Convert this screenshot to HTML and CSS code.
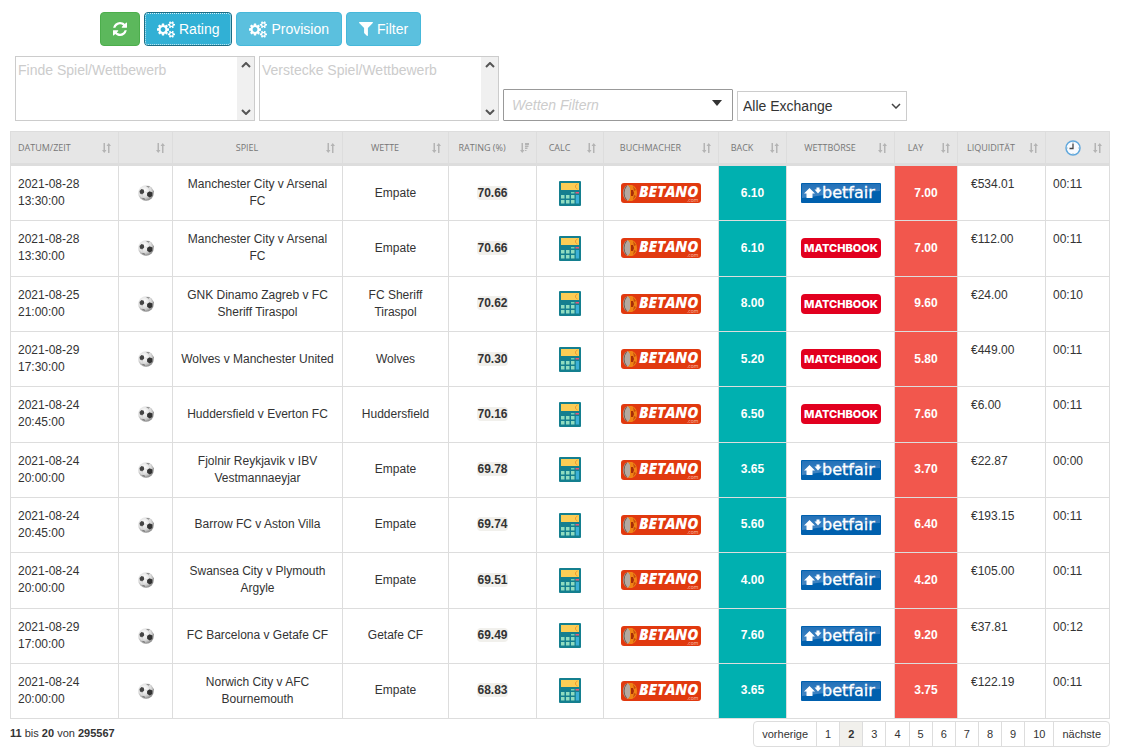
FILE: index.html
```html
<!DOCTYPE html>
<html lang="de">
<head>
    <meta charset="UTF-8">
    <meta name="viewport" content="width=device-width, initial-scale=1.0">
    <title>Oddsmatcher</title>
    <link rel="stylesheet" href="styles.css">
</head>
<body>
<svg class="sprite" aria-hidden="true">
    <defs>
        <linearGradient id="fair-bg" x1="0" y1="0" x2="0" y2="1">
            <stop offset="0" stop-color="#2371b8"/>
            <stop offset="1" stop-color="#4387c5"/>
        </linearGradient>
        <radialGradient id="ball-bg" cx="0.4" cy="0.35" r="0.7">
            <stop offset="0" stop-color="#fff"/>
            <stop offset="0.6" stop-color="#dcdcdc"/>
            <stop offset="1" stop-color="#7d7d7d"/>
        </radialGradient>
    </defs>
    <symbol id="cogs" viewBox="0 0 1920 1792">
        <path d="M896 896q0-106-75-181t-181-75-181 75-75 181 75 181 181 75 181-75 75-181zm768 512q0-52-38-90t-90-38-90 38-38 90q0 53 37.5 90.5t90.5 37.5 90.5-37.5 37.5-90.5zm0-1024q0-52-38-90t-90-38-90 38-38 90q0 53 37.5 90.5t90.5 37.5 90.5-37.5 37.5-90.5zm-384 421v185q0 10-7 19.5t-16 10.5l-155 24q-11 35-32 76 34 48 90 115 7 11 7 20 0 12-7 19-23 30-82.5 89.5t-78.5 59.5q-11 0-21-7l-115-90q-37 19-77 31-11 108-23 155-7 24-30 24h-186q-11 0-20-7.5t-10-17.5l-23-153q-34-10-75-31l-118 89q-7 7-20 7-11 0-21-8-144-133-144-160 0-9 7-19 10-14 41-53t47-61q-23-44-35-82l-152-24q-10-1-17-9.5t-7-19.5v-185q0-10 7-19.5t16-10.5l155-24q11-35 32-76-34-48-90-115-7-11-7-20 0-12 7-20 22-30 82-89t79-59q11 0 21 7l115 90q34-18 77-32 11-108 23-154 7-24 30-24h186q11 0 20 7.5t10 17.5l23 153q34 10 75 31l118-89q8-7 20-7 11 0 21 8 144 133 144 160 0 8-7 19-12 16-42 54t-45 60q23 48 34 82l152 23q10 2 17 10.5t7 19.5zm640 533v140q0 16-149 31-12 27-30 52 51 113 51 138 0 4-4 7-122 71-124 71-8 0-46-47t-52-68q-20 2-30 2t-30-2q-14 21-52 68t-46 47q-2 0-124-71-4-3-4-7 0-25 51-138-18-25-30-52-149-15-149-31v-140q0-16 149-31 13-29 30-52-51-113-51-138 0-4 4-7 4-2 35-20t59-34 30-16q8 0 46 46.5t52 67.5q20-2 30-2t30 2q51-71 92-112l6-2q4 0 124 70 4 3 4 7 0 25-51 138 17 23 30 52 149 15 149 31zm0-1024v140q0 16-149 31-12 27-30 52 51 113 51 138 0 4-4 7-122 71-124 71-8 0-46-47t-52-68q-20 2-30 2t-30-2q-14 21-52 68t-46 47q-2 0-124-71-4-3-4-7 0-25 51-138-18-25-30-52-149-15-149-31v-140q0-16 149-31 13-29 30-52-51-113-51-138 0-4 4-7 4-2 35-20t59-34 30-16q8 0 46 46.5t52 67.5q20-2 30-2t30 2q51-71 92-112l6-2q4 0 124 70 4 3 4 7 0 25-51 138 17 23 30 52 149 15 149 31z"/>
    </symbol>
    <symbol id="refresh" viewBox="128 128 1536 1536">
        <path d="M1639 1056q0 5-1 7-64 268-268 434.5t-478 166.5q-146 0-282.5-55t-243.5-157l-129 129q-19 19-45 19t-45-19-19-45v-448q0-26 19-45t45-19h448q26 0 45 19t19 45-19 45l-137 137q71 66 161 102t187 36q134 0 250-65t186-179q11-17 53-117 8-23 30-23h192q13 0 22.5 9.5t9.5 22.5zm25-800v448q0 26-19 45t-45 19h-448q-26 0-45-19t-19-45 19-45l138-138q-148-137-349-137-134 0-250 65t-186 179q-11 17-53 117-8 23-30 23h-199q-13 0-22.5-9.5t-9.5-22.5v-7q65-268 270-434.5t480-166.5q146 0 284 55.5t245 156.5l130-129q19-19 45-19t45 19 19 45z"/>
    </symbol>
    <symbol id="funnel" viewBox="192 256 1408 1408">
        <path d="M1595 295q17 41-14 70l-493 493v742q0 42-39 59-13 5-25 5-27 0-45-19l-256-256q-19-19-19-45v-486l-493-493q-31-29-14-70 17-39 59-39h1280q42 0 59 39z"/>
    </symbol>
    <symbol id="sort" viewBox="0 0 9 10">
        <path d="M1.500 0h1.500v7h1.500L2.250 10 0 7h1.500zM6 10h1.500V3H9L6.750 0 4.500 3H6z"/>
    </symbol>
    <symbol id="sort-desc" viewBox="0 0 9 10">
        <path d="M1.500 0h1.500v7h1.500L2.250 10 0 7h1.500zM5 0h4v2H5zM5 2.500h3.500v1.500H5zM5 4.500h2.500v1.500H5zM5 7h1.500v1H5z"/>
    </symbol>
    <symbol id="clock" viewBox="0 0 16 16">
        <circle cx="8" cy="8" r="7" fill="#f8fbff" stroke="#62a8dc" stroke-width="1.500"/>
        <path d="M8 3.500V8.500H4.500" fill="none" stroke="#444" stroke-width="1.300"/>
        <path d="M8 2v1M14 8h-1M8 14v-1M2 8h1" stroke="#9bb" stroke-width="0.800"/>
    </symbol>
    <symbol id="ball" viewBox="0 0 16 16">
        <circle cx="8" cy="8" r="7.800" fill="url(#ball-bg)"/>
        <path d="M1.500 6l2-2 2.300.800.400 2.700-2 2-2.200-1z" fill="#444"/>
        <path d="M9 8l2.500-1.700 3 1.200-.2 3.500-2.500 1.500-2.600-1.500z" fill="#333"/>
        <path d="M8 1l4 .6-1.500 1.200zM3.500 13l3 .3.500 2zM15 5l.8 2-.8.500z" fill="#777"/>
        <path d="M6 6l3.500 2M4 8.500l1 4.500M9.500 11l-2 3M12 6.500l-1.500-4" stroke="#ccc" stroke-width="0.500"/>
    </symbol>
    <symbol id="calc" viewBox="0 0 22 25">
        <rect width="22" height="25" rx="1" fill="#147f8f"/>
        <rect x="2" y="2" width="18" height="7" fill="#fccd55"/>
        <path d="M18.500 3l-2 1.500v2l2 1.500" fill="none" stroke="#f29a2e"/>
        <path d="M12 11h3.500v1.500H12z" fill="#6fcfb4"/>
        <path d="M16.500 11H20v1.500h-3.500z" fill="#e8587c"/>
        <path d="M2 14h3.500v3.500H2zM7 14h3.500v3.500H7zM12 14h3.500v3.500H12zM2 19h3.500v3.500H2zM7 19h3.500v3.500H7zM12 19h3.500v3.500H12z" fill="#8fdcc0"/>
        <path d="M16.800 14H20v8.500h-3.200z" fill="#3cb0d6"/>
    </symbol>
</svg>

<div class="toolbar">
    <button class="btn btn-green" aria-label="Aktualisieren"><svg class="icon-refresh"><use href="#refresh"/></svg></button>
    <button class="btn btn-active"><svg class="icon-cogs"><use href="#cogs"/></svg>Rating</button>
    <button class="btn"><svg class="icon-cogs"><use href="#cogs"/></svg>Provision</button>
    <button class="btn"><svg class="icon-funnel"><use href="#funnel"/></svg>Filter</button>
</div>

<div class="filters">
    <div class="area">
        <textarea placeholder="Finde Spiel/Wettbewerb" aria-label="Finde Spiel/Wettbewerb"></textarea>
        <div class="scroll">
            <svg class="chevron" viewBox="0 0 10 6"><path d="M1 5l4-4 4 4"/></svg>
            <svg class="chevron" viewBox="0 0 10 6"><path d="M1 1l4 4 4-4"/></svg>
        </div>
    </div>
    <div class="area">
        <textarea placeholder="Verstecke Spiel/Wettbewerb" aria-label="Verstecke Spiel/Wettbewerb"></textarea>
        <div class="scroll">
            <svg class="chevron" viewBox="0 0 10 6"><path d="M1 5l4-4 4 4"/></svg>
            <svg class="chevron" viewBox="0 0 10 6"><path d="M1 1l4 4 4-4"/></svg>
        </div>
    </div>
    <div class="combo">
        <input type="text" placeholder="Wetten Filtern" aria-label="Wetten Filtern">
        <svg class="caret" viewBox="0 0 10 6"><path d="M0 0h10L5 6z"/></svg>
    </div>
    <select class="exchange" aria-label="Exchange">
        <option>Alle Exchange</option>
        <option>Betfair</option>
        <option>Matchbook</option>
    </select>
</div>

<table class="odds">
    <colgroup>
        <col class="w-date"><col class="w-sport"><col class="w-game"><col class="w-bet">
        <col class="w-rating"><col class="w-calc"><col class="w-bookie"><col class="w-back">
        <col class="w-market"><col class="w-lay"><col class="w-liq"><col class="w-time">
    </colgroup>
    <thead>
        <tr>
            <th><button class="sort left"><span>Datum/Zeit</span><svg><use href="#sort"/></svg></button></th>
            <th><button class="sort" aria-label="Sport"><span></span><svg><use href="#sort"/></svg></button></th>
            <th><button class="sort"><span>Spiel</span><svg><use href="#sort"/></svg></button></th>
            <th><button class="sort"><span>Wette</span><svg><use href="#sort"/></svg></button></th>
            <th><button class="sort"><span>Rating (%)</span><svg><use href="#sort-desc"/></svg></button></th>
            <th><button class="sort"><span>Calc</span><svg><use href="#sort"/></svg></button></th>
            <th><button class="sort"><span>Buchmacher</span><svg><use href="#sort"/></svg></button></th>
            <th><button class="sort"><span>Back</span><svg><use href="#sort"/></svg></button></th>
            <th><button class="sort"><span>Wettbörse</span><svg><use href="#sort"/></svg></button></th>
            <th><button class="sort"><span>Lay</span><svg><use href="#sort"/></svg></button></th>
            <th><button class="sort"><span>Liquidität</span><svg><use href="#sort"/></svg></button></th>
            <th><button class="sort right" aria-label="Zeit"><span><svg class="icon-clock"><use href="#clock"/></svg></span><svg><use href="#sort"/></svg></button></th>
        </tr>
    </thead>
    <tbody id="rows"></tbody>
</table>

<div class="footer">
    <div class="info"><b>11</b> bis <b>20</b> von <b>295567</b></div>
    <nav class="pages">
        <a href="#">vorherige</a>
        <a href="#">1</a>
        <a href="#" class="current">2</a>
        <a href="#">3</a>
        <a href="#">4</a>
        <a href="#">5</a>
        <a href="#">6</a>
        <a href="#">7</a>
        <a href="#">8</a>
        <a href="#">9</a>
        <a href="#">10</a>
        <a href="#">nächste</a>
    </nav>
</div>

<script>
    const logos = {
        betano: `<svg class="logo" viewBox="0 0 80 20">
            <rect width="80" height="20" rx="3" fill="#e1390f"/>
            <path d="M7 2q-5 2-5 8t5 8l2-2V4z" fill="#b5a9a0"/>
            <path d="M5.500 3q-2.500 3-2.500 7t2.500 7" fill="none" stroke="#6d5a50"/>
            <path d="M7 2h4q5 2 5 8t-5 8H7l2-3V5z" fill="#f08215"/>
            <path d="M10 7h2l1 3-1 3h-2z" fill="#a82c08"/>
            <path d="M12 3l3 4-2 1zM12 17l3-4-2-1z" fill="#c54c0c"/>
            <text class="betano-name" x="18" y="14">BETANO</text>
            <text class="betano-com" x="66" y="19">.com</text>
        </svg>`,
        betfair: `<svg class="logo" viewBox="0 0 80 20">
            <rect width="80" height="20" rx="1" fill="#0060ae"/>
            <path d="M1 1h78v7Q40 9 1 15z" fill="url(#fair-bg)"/>
            <path d="M8.500 5L14 10.500h-2.500V15h-6v-4.500H3z" fill="#fff"/>
            <path d="M15.500 4.500h3v2h2L17 10.500 13.500 6.500h2z" fill="#fff"/>
            <text class="betfair-name" x="21" y="15">betfair</text>
        </svg>`,
        matchbook: `<svg class="logo" viewBox="0 0 80 20">
            <rect width="80" height="20" rx="4" fill="#e2001f"/>
            <text class="matchbook-name" x="40" y="14">MATCHBOOK</text>
        </svg>`
    };

    // date, time, game, bet, rating, back, exchange, lay, liquidity, age
    const bets = [
        ['2021-08-28', '13:30:00', 'Manchester City v Arsenal FC', 'Empate', '70.66', '6.10', 'betfair', '7.00', '€534.01', '00:11'],
        ['2021-08-28', '13:30:00', 'Manchester City v Arsenal FC', 'Empate', '70.66', '6.10', 'matchbook', '7.00', '€112.00', '00:11'],
        ['2021-08-25', '21:00:00', 'GNK Dinamo Zagreb v FC Sheriff Tiraspol', 'FC Sheriff Tiraspol', '70.62', '8.00', 'matchbook', '9.60', '€24.00', '00:10'],
        ['2021-08-29', '17:30:00', 'Wolves v Manchester United', 'Wolves', '70.30', '5.20', 'matchbook', '5.80', '€449.00', '00:11'],
        ['2021-08-24', '20:45:00', 'Huddersfield v Everton FC', 'Huddersfield', '70.16', '6.50', 'matchbook', '7.60', '€6.00', '00:11'],
        ['2021-08-24', '20:00:00', 'Fjolnir Reykjavik v IBV Vestmannaeyjar', 'Empate', '69.78', '3.65', 'betfair', '3.70', '€22.87', '00:00'],
        ['2021-08-24', '20:45:00', 'Barrow FC v Aston Villa', 'Empate', '69.74', '5.60', 'betfair', '6.40', '€193.15', '00:11'],
        ['2021-08-24', '20:00:00', 'Swansea City v Plymouth Argyle', 'Empate', '69.51', '4.00', 'betfair', '4.20', '€105.00', '00:11'],
        ['2021-08-29', '17:00:00', 'FC Barcelona v Getafe CF', 'Getafe CF', '69.49', '7.60', 'betfair', '9.20', '€37.81', '00:12'],
        ['2021-08-24', '20:00:00', 'Norwich City v AFC Bournemouth', 'Empate', '68.83', '3.65', 'betfair', '3.75', '€122.19', '00:11']
    ];

    document.getElementById('rows').innerHTML = bets.map(([date, time, game, bet, rating, back, exchange, lay, liquidity, age]) => `
        <tr>
            <td class="top">${date}<br>${time}</td>
            <td><svg class="icon-ball"><use href="#ball"/></svg></td>
            <td>${game}</td>
            <td class="bet">${bet}</td>
            <td><span class="badge">${rating}</span></td>
            <td><svg class="icon-calc"><use href="#calc"/></svg></td>
            <td>${logos.betano}</td>
            <td class="back">${back}</td>
            <td>${logos[exchange]}</td>
            <td class="lay">${lay}</td>
            <td class="top money">${liquidity}</td>
            <td class="top">${age}</td>
        </tr>`).join('');
</script>
</body>
</html>
```
FILE: styles.css
```css
* {
    box-sizing: border-box;
}

body {
    margin: 0;
    padding: 12px 17px 0 10px;
    background-color: #fff;
    color: #333;
    font-family: "Liberation Sans", Arial, sans-serif;
    font-size: 12px;
    line-height: 1.43;
}

button,
input,
textarea,
select {
    font-family: inherit;
}

.sprite {
    position: absolute;
    width: 0;
    height: 0;
}

/* buttons */
.toolbar {
    display: flex;
    gap: 4px;
    padding-left: 90px;
}

.btn {
    display: flex;
    align-items: center;
    gap: 4px;
    height: 34px;
    padding: 0 12px;
    border: 1px solid #46b8da;
    border-radius: 4px;
    background-color: #5bc0de;
    color: #fff;
    font-size: 14px;
    cursor: pointer;
}

.btn svg {
    fill: #fff;
}

.btn-green {
    border-color: #4cae4c;
    background-color: #5cb85c;
}

.btn-active {
    border-color: #1b6d85;
    background-color: #31b0d5;
    outline: 1px dotted #d5eef6;
    outline-offset: -2px;
}

.icon-refresh,
.icon-funnel {
    width: 14px;
    height: 14px;
}

.icon-cogs {
    width: 18px;
    height: 17px;
}

/* filters */
.filters {
    display: flex;
    align-items: flex-end;
    gap: 4px;
    padding: 10px 5px;
}

.area {
    display: flex;
    width: 240px;
    height: 65px;
    border: 1px solid #ccc;
}

.area textarea {
    flex: 1;
    min-width: 0;
    padding: 3px 2px;
    border: 0;
    resize: none;
    overflow: hidden;
    font-size: 14px;
    line-height: 20px;
}

.scroll {
    display: flex;
    flex-direction: column;
    justify-content: space-between;
    align-items: center;
    width: 17px;
    padding: 5px 0;
    background-color: #f0f0f0;
}

.chevron {
    width: 10px;
    height: 6px;
    fill: none;
    stroke: #555;
    stroke-width: 2;
}

::placeholder {
    color: #ccc;
    opacity: 1;
}

.combo {
    display: flex;
    align-items: center;
    width: 230px;
    height: 32px;
    padding: 0 10px 0 8px;
    border: 1px solid #999;
    border-radius: 1px;
}

.combo input {
    flex: 1;
    min-width: 0;
    padding: 0;
    border: 0;
    font-size: 14px;
    font-style: italic;
}

.caret {
    width: 10px;
    height: 6px;
    margin-bottom: 4px;
    fill: #333;
}

.exchange {
    appearance: none;
    width: 170px;
    height: 30px;
    padding: 0 20px 0 5px;
    border: 1px solid #ccc;
    border-radius: 0;
    background: #fff url("data:image/svg+xml,%3Csvg xmlns='http://www.w3.org/2000/svg' viewBox='0 0 10 6'%3E%3Cpath d='M1 1l4 4 4-4' fill='none' stroke='%23444' stroke-width='1.5'/%3E%3C/svg%3E") no-repeat right 5px center / 10px 6px;
    color: #333;
    font-size: 14px;
}

/* table */
.odds {
    width: 100%;
    table-layout: fixed;
    border-collapse: collapse;
}

.w-date { width: 108px; }
.w-sport { width: 54px; }
.w-game { width: 170px; }
.w-bet { width: 106px; }
.w-rating { width: 88px; }
.w-calc { width: 67px; }
.w-bookie { width: 115px; }
.w-back { width: 68px; }
.w-market { width: 108px; }
.w-lay { width: 63px; }
.w-liq { width: 88px; }
.w-time { width: 64px; }

.odds th {
    height: 33px;
    padding: 0 7px;
    border: 1px solid #ddd;
    border-bottom-width: 3px;
    background-color: #e6e6e6;
}

.sort {
    display: flex;
    align-items: center;
    gap: 12px;
    width: 100%;
    padding: 0;
    border: 0;
    background: none;
    color: #777;
    font-family: "Open Sans", sans-serif;
    font-size: 9px;
    line-height: 14px;
    text-transform: uppercase;
    white-space: nowrap;
    cursor: pointer;
}

.sort span {
    display: flex;
    flex: 1;
    justify-content: center;
}

.sort.left span {
    justify-content: flex-start;
}

.sort.right span {
    justify-content: flex-end;
}

.sort svg {
    flex: none;
    width: 9px;
    height: 10px;
    fill: #b4b4b4;
}

.sort .icon-clock {
    width: 16px;
    height: 16px;
}

.odds td {
    padding: 10px 7px;
    border: 1px solid #ddd;
    text-align: center;
    vertical-align: middle;
}

.odds td.top {
    text-align: left;
    vertical-align: top;
}

.odds td.money {
    padding-left: 13px;
}

.odds td.bet {
    padding-left: 16px;
    padding-right: 16px;
}

.odds td.back,
.odds td.lay {
    color: #fff;
    font-weight: bold;
}

.odds td.back {
    background-color: #00b0b0;
}

.odds td.lay {
    background-color: #f2574d;
}

.odds td svg {
    display: block;
    margin: 0 auto;
}

.badge {
    display: inline-block;
    border-radius: 4px;
    background-color: #f1f0ec;
    font-weight: bold;
    line-height: 14px;
}

.icon-ball {
    width: 16px;
    height: 16px;
}

.icon-calc {
    width: 22px;
    height: 25px;
}

.logo {
    width: 80px;
    height: 20px;
}

.betano-name {
    fill: #fff;
    font: italic 800 15px "Open Sans", sans-serif;
}

.betano-com {
    fill: #f7c3b4;
    font: 5px "Open Sans", sans-serif;
}

.betfair-name {
    fill: #fff;
    stroke: #fff;
    stroke-width: 0.3;
    font: 16px "DejaVu Sans", sans-serif;
}

.matchbook-name {
    fill: #fff;
    font: 800 11px Inter, sans-serif;
    text-anchor: middle;
}

/* footer */
.footer {
    display: flex;
    justify-content: space-between;
    align-items: center;
    padding-top: 2px;
    font-size: 11px;
}

.pages {
    display: flex;
    border: 1px solid #ddd;
    border-radius: 4px;
    overflow: hidden;
}

.pages a {
    padding: 0 8px;
    border-left: 1px solid #ddd;
    color: #333;
    line-height: 24px;
    text-decoration: none;
}

.pages a:first-child {
    border-left: 0;
}

.pages .current {
    background-color: #f1f0ec;
    font-weight: bold;
}
```
